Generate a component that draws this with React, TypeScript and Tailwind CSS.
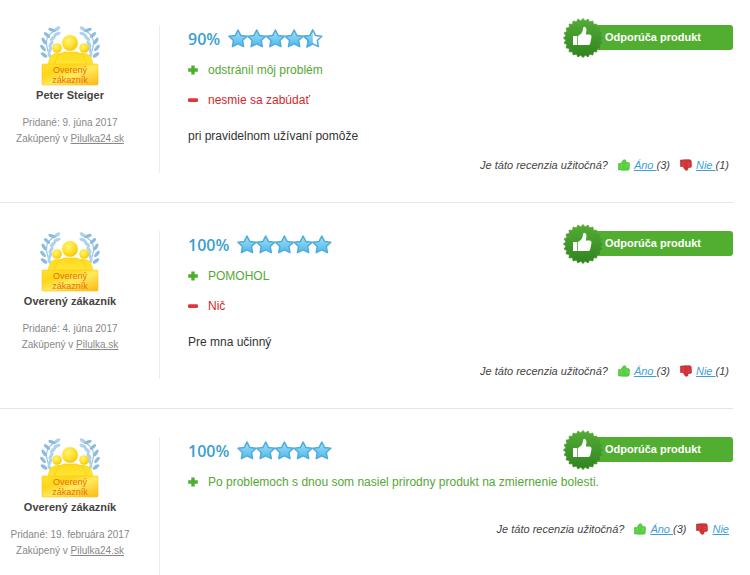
type Review = {
  id: number
  author: string
  added: string
  shop: string
  rating: number
  pro?: string
  con?: string
  text?: string
  yes: number
  no?: number
}

const reviews: Review[] = [
  {
    id: 1,
    author: 'Peter Steiger',
    added: '9. júna 2017',
    shop: 'Pilulka24.sk',
    rating: 90,
    pro: 'odstránil môj problém',
    con: 'nesmie sa zabúdať',
    text: 'pri pravidelnom užívaní pomôže',
    yes: 3,
    no: 1,
  },
  {
    id: 2,
    author: 'Overený zákazník',
    added: '4. júna 2017',
    shop: 'Pilulka.sk',
    rating: 100,
    pro: 'POMOHOL',
    con: 'Nič',
    text: 'Pre mna učinný',
    yes: 3,
    no: 1,
  },
  {
    id: 3,
    author: 'Overený zákazník',
    added: '19. februára 2017',
    shop: 'Pilulka24.sk',
    rating: 100,
    pro: 'Po problemoch s dnou som nasiel prirodny produkt na zmiernenie bolesti.',
    yes: 3,
  },
]

// x, y, rotation of the leaves on the left branch
const leaves = [
  [17, 4, -35],
  [12, 5, 20],
  [17, 9, -25],
  [7, 10, 40],
  [13, 13, -45],
  [4, 16, 60],
  [11, 19, -60],
  [3, 23, 50],
  [10, 25, -70],
  [4, 30, 35],
  [10, 31, 60],
]

function Branch() {
  return (
    <g>
      <path d="M19 4Q4 9 7 22Q8 29 13 34" fill="none" stroke="#9cc5e0" strokeWidth="1.2" />
      {leaves.map(([x, y, r], i) => (
        <ellipse
          key={i}
          cx={x}
          cy={y}
          rx="3.8"
          ry="1.7"
          fill={i % 2 ? '#8bbcdc' : '#aed2ea'}
          transform={`rotate(${r} ${x} ${y})`}
        />
      ))}
    </g>
  )
}

function VerifiedBadge() {
  return (
    <svg width="60" height="62" viewBox="0 0 60 62" role="img" aria-label="Overený zákazník">
      <defs>
        <radialGradient id="head" cx="40%" cy="35%" r="70%">
          <stop offset="0" stopColor="#fff27a" />
          <stop offset="0.6" stopColor="#ffdf24" />
          <stop offset="1" stopColor="#f3bd0c" />
        </radialGradient>
        <linearGradient id="body" x1="0" y1="0" x2="0" y2="1">
          <stop offset="0" stopColor="#ffd91c" />
          <stop offset="1" stopColor="#ffe838" />
        </linearGradient>
        <linearGradient id="plate" x1="0" y1="0" x2="1" y2="1">
          <stop offset="0" stopColor="#ffe32a" />
          <stop offset="0.3" stopColor="#ffd51c" />
          <stop offset="0.55" stopColor="#ffe95c" />
          <stop offset="1" stopColor="#fcb812" />
        </linearGradient>
      </defs>
      <Branch />
      <g transform="translate(60 0) scale(-1 1)">
        <Branch />
      </g>
      <circle cx="17" cy="23" r="4.8" fill="url(#head)" />
      <circle cx="44" cy="23" r="4.8" fill="url(#head)" />
      <path d="M8 42V37Q10 28 18 28H43Q51 28 53 37V42Z" fill="url(#body)" />
      <path d="M14 42Q16 29 24 27H37Q45 29 47 42Z" fill="url(#body)" stroke="#f5c916" strokeWidth="0.6" />
      <circle cx="30" cy="18" r="8" fill="url(#head)" stroke="#fff0a0" strokeWidth="0.5" />
      <rect x="2" y="39" width="56" height="21" rx="1" fill="url(#plate)" stroke="#fbc51d" strokeWidth="0.6" />
      <g fill="#e56f12" fontFamily="Liberation Sans, sans-serif" fontSize="9" textAnchor="middle">
        <text x="30" y="48">Overený</text>
        <text x="30" y="58">zákazník</text>
      </g>
    </svg>
  )
}

const starPath = 'M10 1L12.7 6.4L19 7.2L14.5 11.5L15.6 17.6L10 14.8L4.4 17.6L5.5 11.5L1 7.2L7.3 6.4Z'

function Stars({ rating }: { rating: number }) {
  return (
    <svg width="96" height="20" viewBox="0 0 96 20" role="img" aria-label={`${rating / 20} z 5`}>
      <defs>
        <linearGradient id="star" x1="0" y1="0" x2="0" y2="1">
          <stop offset="0" stopColor="#a2e0f8" />
          <stop offset="1" stopColor="#4fb9ea" />
        </linearGradient>
        <clipPath id="half">
          <rect width="10" height="20" />
        </clipPath>
      </defs>
      {[0, 1, 2, 3, 4].map((i) => {
        const full = rating >= (i + 1) * 20
        return (
          <g key={i} transform={`translate(${i * 18.7} 0)`}>
            <path d={starPath} fill={full ? 'url(#star)' : '#fff'} stroke="#4fabdc" strokeLinejoin="round" strokeWidth="1.5" />
            {!full && <path d={starPath} fill="url(#star)" stroke="#4fabdc" strokeWidth="1.5" clipPath="url(#half)" />}
          </g>
        )
      })}
    </svg>
  )
}

const sealPoints = Array.from({ length: 48 }, (_, i) => {
  const a = (i * Math.PI) / 24
  const r = i % 2 ? 17.2 : 19.6
  return `${20 + Math.cos(a) * r},${20 + Math.sin(a) * r}`
}).join(' ')

function RecommendBanner() {
  return (
    <div className="relative h-[25px] w-[150px] rounded-r-[3px] bg-[#52ae30] pl-[22px] text-[11px] leading-[25px] font-bold text-white">
      <svg className="absolute -top-[7px] -left-5" width="40" height="40" viewBox="0 0 40 40" aria-hidden="true">
        <defs>
          <linearGradient id="seal" x1="0" y1="0" x2="0" y2="1">
            <stop offset="0" stopColor="#55ab35" />
            <stop offset="1" stopColor="#2f8420" />
          </linearGradient>
        </defs>
        <polygon points={sealPoints} fill="url(#seal)" stroke="url(#seal)" strokeLinejoin="round" strokeWidth="0.8" />
        <rect x="10" y="18" width="4.3" height="9" fill="#fff" />
        <path
          d="M15 18L18.300 15.500Q20 13 20 10.500Q20 8.800 21.500 8.800Q23.800 9.500 23.500 12.500L22.800 16.500H27Q28.800 17 28.500 19L27.200 25.500Q26.700 27 25 27H15Z"
          fill="#fff"
        />
      </svg>
      Odporúča produkt
    </div>
  )
}

function Thumb({ down }: { down?: boolean }) {
  return (
    <svg width="12" height="12" viewBox="0 0 12 12" aria-hidden="true">
      <g transform={down ? 'translate(0 12) scale(1 -1)' : undefined}>
        <path
          d="M0.500 4.500H3L5 1.300Q6.500 0 7.800 1.300L8.200 3.500H10.500Q11.600 3.800 11.500 5L11.200 10Q11 11.300 9.500 11.300H4L3 11H0.500Z"
          fill={down ? '#d13336' : '#58cf43'}
          stroke={down ? '#b3282c' : '#46b838'}
          strokeWidth="0.6"
        />
        <path d="M3.300 5V10M7.500 5.500H10.500M7.500 7.500H10.300" stroke={down ? '#e25555' : '#78e060'} strokeWidth="0.6" />
      </g>
    </svg>
  )
}

function Sign({ minus }: { minus?: boolean }) {
  return (
    <svg className="shrink-0" width="10" height="10" viewBox="0 0 10 10" aria-hidden="true">
      {minus ? (
        <rect x="0" y="3.300" width="10" height="3.600" rx="1.200" fill="#e3343a" />
      ) : (
        <path d="M3.300 0.500H6.700V3.300H9.800V6.700H6.700V9.500H3.300V6.700H0.200V3.300H3.300Z" fill="#4caf2f" />
      )}
    </svg>
  )
}

function ReviewItem({ review }: { review: Review }) {
  return (
    <article className="flex border-b border-[#e5e5e5] pt-7 pb-[29px] first:pt-[25px] last:border-0 last:pb-0">
      <div className="flex w-40 shrink-0 flex-col items-center border-r border-[#ececec] pr-[19px] pb-4 text-center">
        <VerifiedBadge />
        <h3 className="text-[11px] leading-4 font-bold text-[#444]">{review.author}</h3>
        <p className="mt-3 text-[10px] leading-4 text-[#888]">
          Pridané: {review.added}
          <br />
          Zakúpený v{' '}
          <a href="#" className="underline">
            {review.shop}
          </a>
        </p>
      </div>

      <div className="flex min-w-0 flex-1 flex-col pl-7 text-xs">
        <div className="mb-0.5 flex h-7 items-start justify-between">
          <div className="flex h-7 items-center gap-2">
            <strong className="font-['Open_Sans',sans-serif] text-base font-semibold text-[#3a9fd0]">{review.rating}%</strong>
            <Stars rating={review.rating} />
          </div>
          <RecommendBanner />
        </div>
        {review.pro && (
          <p className="flex items-center gap-[10px] leading-[30px] text-[#55a835]">
            <Sign />
            {review.pro}
          </p>
        )}
        {review.con && (
          <p className="flex items-center gap-[10px] leading-[30px] text-[#d6262e]">
            <Sign minus />
            {review.con}
          </p>
        )}
        <p className="mt-3 leading-[18px] text-[#333]">{review.text}</p>
        <div className="mt-3 flex items-center justify-end pr-1 text-[11px] leading-4 text-[#444] italic">
          <span className="mr-[10px]">Je táto recenzia užitočná?</span>
          <Thumb />
          <span className="mr-[10px] ml-1">
            <a href="#" className="whitespace-pre text-[#3da0d8] underline">{'Áno '}</a>({review.yes})
          </span>
          <Thumb down />
          <span className="ml-1">
            <a href="#" className="whitespace-pre text-[#3da0d8] underline">{review.no ? 'Nie ' : 'Nie'}</a>
            {review.no && `(${review.no})`}
          </span>
        </div>
      </div>
    </article>
  )
}

export default function App() {
  return (
    <main className="mr-[17px] bg-white font-['Liberation_Sans',Arial,sans-serif]">
      {reviews.map((review) => (
        <ReviewItem key={review.id} review={review} />
      ))}
    </main>
  )
}
